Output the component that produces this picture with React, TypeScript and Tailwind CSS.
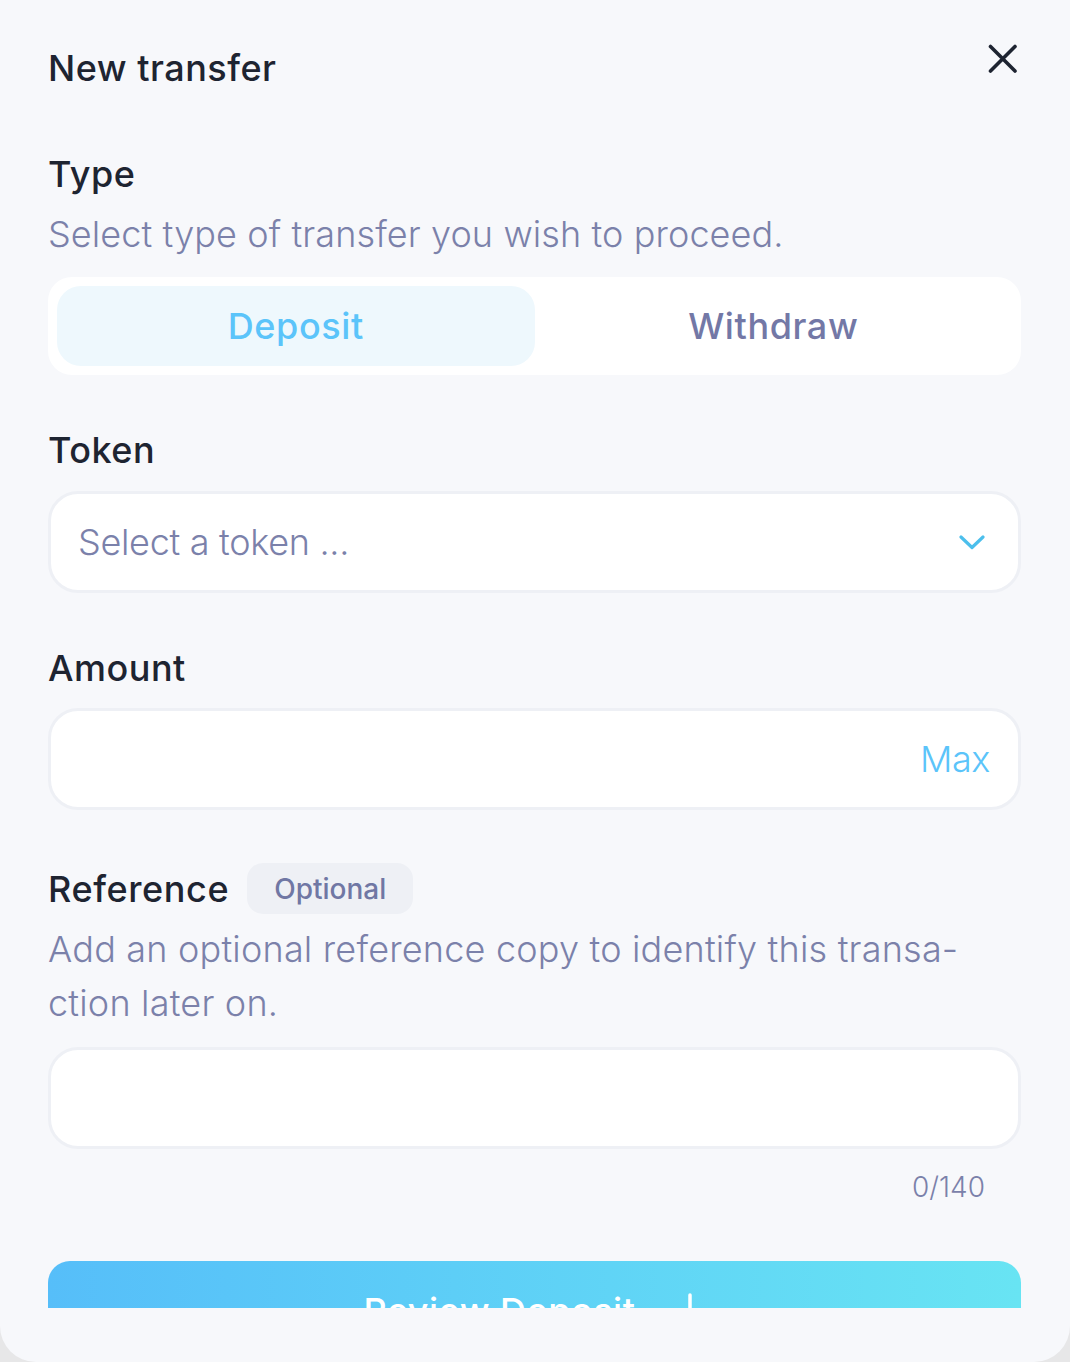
import React from "react";

const font = { fontFamily: "Inter, 'Noto Sans', sans-serif" };

export default function App() {
  return (
    <div className="w-full h-[1362px] bg-[#e7e7e8]" style={font}>
      <div className="h-[1362px] bg-[#f7f8fb] rounded-b-[36px] overflow-hidden">
        <div className="h-[1308px] overflow-hidden pl-[48px] pr-[49px]">
          {/* Header */}
          <div className="flex justify-between items-start pt-[46px]">
            <h1 className="text-[36px] leading-[44px] font-medium text-[#1e2431] tracking-[0.5px]">
              New transfer
            </h1>
            <button className="mt-[-2px] mr-[3px] w-[30px] h-[30px] text-[#1e2431]">
              <svg width="30" height="30" viewBox="0 0 30 30" fill="none">
                <path d="M2.5 2.5L27 27M27 2.5L2.5 27" stroke="currentColor" strokeWidth="3.6" strokeLinecap="round" />
              </svg>
            </button>
          </div>

          {/* Type */}
          <div className="mt-[62px] text-[36px] leading-[44px] font-medium text-[#1e2431] tracking-[0.5px]">Type</div>
          <p className="mt-[11px] text-[36px] leading-[54px] font-light text-[#7b81aa] tracking-[0.1px] whitespace-nowrap">
            Select type of transfer you wish to proceed.
          </p>
          <div className="mt-[16px] h-[98px] bg-white rounded-[24px] p-[9px] grid grid-cols-2">
            <div className="rounded-[24px] bg-[#eef8fd] flex items-center justify-center text-[36px] font-medium text-[#5bc4fa] tracking-[0.6px]">
              Deposit
            </div>
            <div className="rounded-[24px] flex items-center justify-center text-[36px] font-medium text-[#7378a6] tracking-[0.6px]">
              Withdraw
            </div>
          </div>

          {/* Token */}
          <div className="mt-[53px] text-[36px] leading-[44px] font-medium text-[#1e2431] tracking-[0.5px]">Token</div>
          <div className="mt-[19px] h-[102px] bg-white border-[3px] border-[#eef0f5] rounded-[30px] flex items-center justify-between pl-[27px] pr-[33px]">
            <span className="text-[36px] font-light text-[#7b81aa] tracking-[-0.3px]">Select a token ...</span>
            <svg width="26" height="15" viewBox="0 0 26 15" fill="none">
              <path d="M2 2L13 12.5L24 2" stroke="#4cbfec" strokeWidth="3.2" strokeLinecap="round" strokeLinejoin="round" />
            </svg>
          </div>

          {/* Amount */}
          <div className="mt-[53px] text-[36px] leading-[44px] font-medium text-[#1e2431] tracking-[0.5px]">Amount</div>
          <div className="mt-[18px] h-[102px] bg-white border-[3px] border-[#eef0f5] rounded-[30px] flex items-center justify-end pr-[28px]">
            <span className="text-[36px] font-light text-[#5bc4fa] tracking-[-0.4px]">Max</span>
          </div>

          {/* Reference */}
          <div className="mt-[53px] flex items-center gap-[18px]">
            <span className="text-[36px] leading-[44px] font-medium text-[#1e2431] tracking-[0.6px]">Reference</span>
            <span className="h-[51px] px-[27px] rounded-[16px] bg-[#eef0f5] flex items-center text-[28px] font-medium text-[#7077a4]">
              Optional
            </span>
          </div>
          <p className="mt-[8px] text-[36px] leading-[54px] font-light text-[#7b81aa] tracking-[0.2px]">
            <span className="block whitespace-nowrap">Add an optional reference copy to identify this transa-</span>
            <span className="block whitespace-nowrap">ction later on.</span>
          </p>
          <div className="mt-[17px] h-[102px] bg-white border-[3px] border-[#eef0f5] rounded-[30px]" />
          <div className="mt-[20px] flex justify-end pr-[36px] text-[28px] leading-[36px] font-light text-[#7b81aa]">
            0/140
          </div>

          {/* Button */}
          <button className="mt-[56px] w-full h-[100px] rounded-[22px] bg-gradient-to-r from-[#56bef9] to-[#68e4f3] flex items-center justify-center gap-[40px] text-white text-[36px] font-medium tracking-[0.5px]">
            <span>Review Deposit</span>
            <svg width="30" height="36" viewBox="0 0 30 36" fill="none">
              <path d="M15 2V32M5 22L15 32L25 22" stroke="white" strokeWidth="3.5" strokeLinecap="round" strokeLinejoin="round" />
            </svg>
          </button>
        </div>
      </div>
    </div>
  );
}
